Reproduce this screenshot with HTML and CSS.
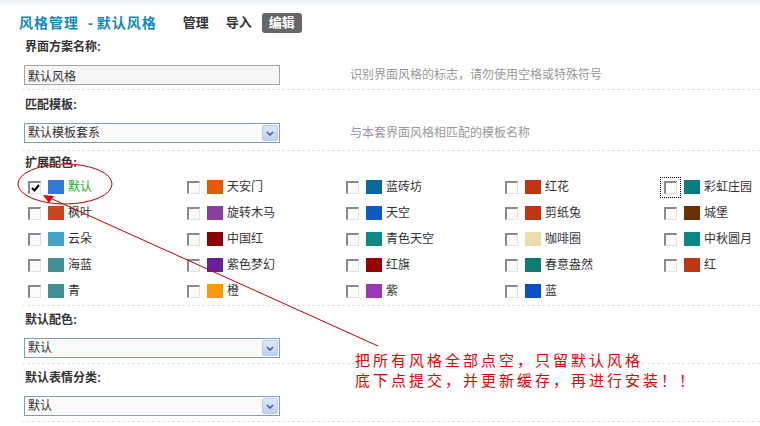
FILE: index.html
```html
<!DOCTYPE html>
<html>
<head>
  <meta charset="utf-8">
  <title>风格管理 - 默认风格</title>
  <link rel="stylesheet" href="styles.css">
</head>
<body>
  <div class="page">
    <div class="itemtitle">
      <h3>风格管理<em>-</em>默认风格</h3>
      <ul class="tab1">
        <li><a href="#">管理</a></li>
        <li><a href="#">导入</a></li>
        <li class="current"><a href="#">编辑</a></li>
      </ul>
    </div>

    <div class="section first">
      <div class="th">界面方案名称:</div>
      <div class="row">
        <input type="text" class="txt" value="默认风格">
        <span class="tips">识别界面风格的标志，请勿使用空格或特殊符号</span>
      </div>
    </div>

    <div class="section tpl">
      <div class="th">匹配模板:</div>
      <div class="row">
        <div class="sel"><span>默认模板套系</span><span class="sel-btn"><svg width="8" height="5" viewBox="0 0 8 5"><polyline points="1,1 4,4 7,1" fill="none" stroke="#4d6185" stroke-width="1.6"/></svg></span></div>
        <span class="tips">与本套界面风格相匹配的模板名称</span>
      </div>
    </div>

    <div class="section colorset">
      <div class="th">扩展配色:</div>
      <div class="colors">
        <label class="color"><span class="cb checked"><svg width="9" height="8" viewBox="0 0 9 8"><polyline points="1,4 3.5,6.5 8,1" fill="none" stroke="#000" stroke-width="2"/></svg></span><i class="sw" style="background:#3179d8"></i><span class="on">默认</span></label>
        <label class="color"><span class="cb"></span><i class="sw" style="background:#e55b00"></i>天安门</label>
        <label class="color"><span class="cb"></span><i class="sw" style="background:#0a6a9e"></i>蓝砖坊</label>
        <label class="color"><span class="cb"></span><i class="sw" style="background:#c03514"></i>红花</label>
        <label class="color"><span class="cb focus"></span><i class="sw" style="background:#087e7e"></i>彩虹庄园</label>

        <label class="color"><span class="cb"></span><i class="sw" style="background:#c8461c"></i>枫叶</label>
        <label class="color"><span class="cb"></span><i class="sw" style="background:#8a3fa0"></i>旋转木马</label>
        <label class="color"><span class="cb"></span><i class="sw" style="background:#0a5bc4"></i>天空</label>
        <label class="color"><span class="cb"></span><i class="sw" style="background:#c03514"></i>剪纸兔</label>
        <label class="color"><span class="cb"></span><i class="sw" style="background:#6e3000"></i>城堡</label>

        <label class="color"><span class="cb"></span><i class="sw" style="background:#45a3c8"></i>云朵</label>
        <label class="color"><span class="cb"></span><i class="sw" style="background:#8b0000"></i>中国红</label>
        <label class="color"><span class="cb"></span><i class="sw" style="background:#0c8a88"></i>青色天空</label>
        <label class="color"><span class="cb"></span><i class="sw" style="background:#ebdcac"></i>咖啡圈</label>
        <label class="color"><span class="cb"></span><i class="sw" style="background:#0a8888"></i>中秋圆月</label>

        <label class="color"><span class="cb"></span><i class="sw" style="background:#3f8f94"></i>海蓝</label>
        <label class="color"><span class="cb"></span><i class="sw" style="background:#6a1f9c"></i>紫色梦幻</label>
        <label class="color"><span class="cb"></span><i class="sw" style="background:#990000"></i>红旗</label>
        <label class="color"><span class="cb"></span><i class="sw" style="background:#0c7c74"></i>春意盎然</label>
        <label class="color"><span class="cb"></span><i class="sw" style="background:#c03514"></i>红</label>

        <label class="color"><span class="cb"></span><i class="sw" style="background:#3f8f94"></i>青</label>
        <label class="color"><span class="cb"></span><i class="sw" style="background:#f99a0a"></i>橙</label>
        <label class="color"><span class="cb"></span><i class="sw" style="background:#9b38b8"></i>紫</label>
        <label class="color"><span class="cb"></span><i class="sw" style="background:#0a52c4"></i>蓝</label>
      </div>
    </div>

    <div class="section">
      <div class="th">默认配色:</div>
      <div class="row">
        <div class="sel"><span>默认</span><span class="sel-btn"><svg width="8" height="5" viewBox="0 0 8 5"><polyline points="1,1 4,4 7,1" fill="none" stroke="#4d6185" stroke-width="1.6"/></svg></span></div>
      </div>
    </div>

    <div class="section">
      <div class="th">默认表情分类:</div>
      <div class="row">
        <div class="sel"><span>默认</span><span class="sel-btn"><svg width="8" height="5" viewBox="0 0 8 5"><polyline points="1,1 4,4 7,1" fill="none" stroke="#4d6185" stroke-width="1.6"/></svg></span></div>
      </div>
    </div>

    <!-- red hand-drawn note on top of the form -->
    <svg class="mark" width="760" height="426" viewBox="0 0 760 426">
      <ellipse cx="65" cy="184" rx="47" ry="20" fill="none" stroke="#c00000" stroke-width="1"/>
      <line x1="50" y1="198" x2="378" y2="346" stroke="#c00000" stroke-width="1"/>
      <polygon points="43,195 54,196 49,203" fill="#e00000"/>
    </svg>
    <div class="note">
      <div>把所有风格全部点空，只留默认风格</div>
      <div>底下点提交，并更新缓存，再进行安装！！</div>
    </div>
  </div>
</body>
</html>
```

FILE: styles.css
```css
body {
  margin: 0;
  font: 12px/18px "Liberation Sans", "Noto Sans CJK SC", sans-serif;
  color: #333;
  background: #fff linear-gradient(#edf2f8, #fff 9px) no-repeat;
}

.page {
  position: relative;
  width: 760px;
  height: 426px;
  overflow: hidden;
}

.itemtitle {
  display: flex;
  align-items: center;
  height: 20px;
  padding: 13px 0 0 19px;
}

.itemtitle h3 {
  margin: 0 19px 0 0;
  font-size: 14px;
  line-height: 20px;
  letter-spacing: 1px;
  color: #1188c0;
}

.itemtitle h3 em {
  font-style: normal;
  margin: 0 3px 0 9px;
}

.tab1 {
  display: flex;
  list-style: none;
  margin: 0;
  padding: 0;
}

.tab1 li {
  margin-right: 3px;
}

.tab1 a {
  display: block;
  height: 20px;
  padding: 0 7px;
  line-height: 20px;
  font-size: 13px;
  font-weight: bold;
  color: #333;
  text-decoration: none;
  border-radius: 3px;
}

.tab1 .current a {
  background: #666;
  color: #fff;
}

.section {
  margin-left: 22px;
  padding: 5px 0 5px 2px;
  border-bottom: 1px dashed #dbe2e8;
}

.section.first {
  padding-bottom: 4px;
}

.section.tpl {
  padding: 6px 0 7px 2px;
}

.section.colorset {
  padding: 3px 0 1px 2px;
}

.th {
  font-weight: bold;
  line-height: 18px;
  padding-left: 1px;
}

.row {
  display: flex;
  align-items: center;
  margin-top: 9px;
}

.txt {
  width: 256px;
  height: 20px;
  box-sizing: border-box;
  margin: 0;
  padding: 0 3px;
  border: 1px solid #a5a5a5;
  background: #f5f5f5;
  font: inherit;
  color: #333;
  outline: none;
}

.tips {
  margin-left: 70px;
  color: #999;
}

.sel {
  display: flex;
  align-items: center;
  justify-content: space-between;
  width: 256px;
  height: 20px;
  box-sizing: border-box;
  padding-left: 3px;
  border: 1px solid #7f9db9;
  background: #fafafa;
}

.sel-btn {
  display: flex;
  align-items: center;
  justify-content: center;
  width: 16px;
  height: 16px;
  margin-right: 1px;
  box-sizing: border-box;
  border: 1px solid #b8cbef;
  border-radius: 2px;
  background: linear-gradient(#dfe8fc, #bccff6);
}

.colors {
  display: grid;
  grid-template-columns: repeat(5, 159px);
  margin-top: 2px;
  padding-left: 4px;
}

.color {
  display: flex;
  align-items: center;
  height: 26px;
  white-space: nowrap;
}

.cb {
  display: flex;
  align-items: center;
  justify-content: center;
  width: 13px;
  height: 13px;
  margin-right: 7px;
  box-sizing: border-box;
  border-top: 2px solid #8a8a8a;
  border-left: 2px solid #8a8a8a;
  border-right: 1px solid #e2e2e2;
  border-bottom: 1px solid #e2e2e2;
  background: #fbfbf8;
}

.cb.focus {
  outline: 1px dotted #000;
  outline-offset: 3px;
}

.sw {
  width: 16px;
  height: 14px;
  margin-right: 4px;
}

.on {
  color: #22aa22;
}

.mark {
  position: absolute;
  left: 0;
  top: 0;
  pointer-events: none;
}

.note {
  position: absolute;
  left: 355px;
  top: 350px;
  font-family: "Noto Sans CJK SC", sans-serif;
  font-size: 15px;
  line-height: 20px;
  letter-spacing: 3px;
  color: #e60000;
}
```
